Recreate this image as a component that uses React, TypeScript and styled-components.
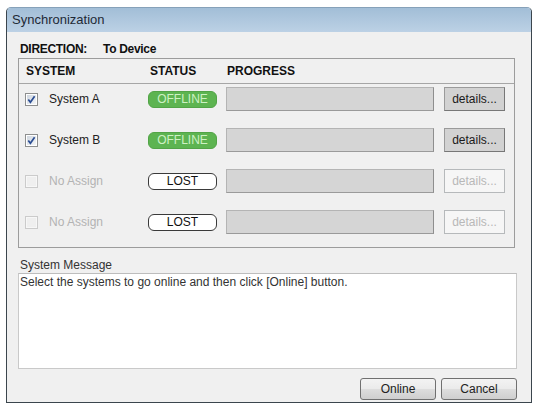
import * as React from 'react';
import styled, { createGlobalStyle } from 'styled-components';

const GlobalStyle = createGlobalStyle`
  html, body {
    margin: 0;
    padding: 0;
    background: #ffffff;
  }
  body {
    font-family: "Liberation Sans", Arial, sans-serif;
    font-size: 12px;
    color: #222;
  }
`;

const Window = styled.div`
  margin: 7px 0 0 6px;
  width: 526px;
  box-sizing: border-box;
  border: 1px solid #3b454d;
  border-top-color: #86a1b9;
  border-radius: 5px 5px 0 0;
  background: #f0f0f0;
  box-shadow: 0 1px 0 #4f8ea3;
  overflow: hidden;
  display: flex;
  flex-direction: column;
`;

const TitleBar = styled.div`
  height: 24px;
  line-height: 24px;
  padding-left: 5px;
  font-size: 13px;
  color: #1e2a36;
  background: linear-gradient(#a2bed7, #bcd1e5);
`;

const Content = styled.div`
  display: flex;
  flex-direction: column;
  padding: 10px 14px 2px 11px;
`;

const DirectionLine = styled.div`
  display: flex;
  height: 14px;
  line-height: 14px;
  padding-left: 2px;
  font-weight: bold;
  letter-spacing: -0.3px;
  color: #111;
`;

const DirectionLabel = styled.span`
  width: 83px;
`;

const Table = styled.div`
  margin: 2px 2px 0 0;
  border: 1px solid #9c9c9c;
  display: flex;
  flex-direction: column;
`;

const Grid = styled.div`
  display: grid;
  grid-template-columns: 123px 78px 218px 61px;
  align-items: center;
`;

const HeaderRow = styled(Grid)`
  height: 24px;
  padding-left: 7px;
  border-bottom: 1px solid #a6a6a6;
  font-weight: bold;
  color: #111;
`;

const HeaderCell = styled.span<{ $shift?: number }>`
  padding-left: ${(p) => p.$shift ?? 0}px;
`;

const Body = styled.div`
  display: flex;
  flex-direction: column;
  gap: 17px;
  padding: 3px 0 13px 6px;
`;

const Row = styled(Grid)`
  height: 24px;
`;

const SystemCell = styled.div`
  display: flex;
  align-items: center;
  gap: 11px;
`;

const SystemName = styled.span<{ $disabled?: boolean }>`
  color: ${(p) => (p.$disabled ? '#b3b3b3' : '#222')};
`;

const Badge = styled.div<{ $online: boolean }>`
  box-sizing: border-box;
  width: 69px;
  height: 17px;
  border-radius: 6px;
  display: flex;
  align-items: center;
  justify-content: center;
  font-size: 12px;
  ${(p) =>
    p.$online
      ? `background: #5db451; border: 1px solid #52a447; color: #cdf1c4;`
      : `background: #ffffff; border: 1px solid #3a3a3a; color: #111;`}
`;

const Progress = styled.div`
  box-sizing: border-box;
  width: 208px;
  height: 24px;
  background: #d5d5d5;
  border: 1px solid #b4b4b4;
  border-right-color: #8e8e8e;
  border-bottom-color: #9a9a9a;
`;

const DetailsButton = styled.button<{ $disabled?: boolean }>`
  box-sizing: border-box;
  width: 61px;
  height: 24px;
  padding: 0;
  font-family: "Liberation Sans", Arial, sans-serif;
  font-size: 12px;
  ${(p) =>
    p.$disabled
      ? `background: #f6f6f6; border: 1px solid #b6b9bb; color: #b8b8b8;`
      : `background: #d2d2d2; border: 1px solid #777; border-top-color: #9a9a9a; border-left-color: #9a9a9a; color: #1a1a1a;`}
`;

const MessageLabel = styled.div`
  margin-top: 10px;
  height: 14px;
  line-height: 14px;
  padding-left: 2px;
  color: #333;
`;

const MessageBox = styled.div`
  margin-top: 1px;
  box-sizing: border-box;
  height: 96px;
  background: #ffffff;
  border: 1px solid #c9c9c9;
  border-top-color: #bdbdbd;
  padding: 1px 1px;
  line-height: 14px;
  color: #333;
`;

const ButtonBar = styled.div`
  margin-top: 9px;
  display: flex;
  justify-content: flex-end;
  gap: 5px;
`;

const DialogButton = styled.button`
  box-sizing: border-box;
  width: 76px;
  height: 22px;
  padding: 0;
  border: 1px solid #707070;
  border-radius: 3px;
  background: linear-gradient(#f3f3f3 0%, #ebebeb 48%, #dddddd 52%, #cfcfcf 100%);
  font-family: "Liberation Sans", Arial, sans-serif;
  font-size: 12px;
  color: #222;
`;

const CheckBox = ({ checked, disabled }: { checked: boolean; disabled?: boolean }) => (
  <svg width="13" height="13" viewBox="0 0 13 13">
    <defs>
      <linearGradient id="cbFill" x1="0" y1="0" x2="1" y2="1">
        <stop offset="0" stopColor="#cfd6df" />
        <stop offset="1" stopColor="#f4f6f8" />
      </linearGradient>
    </defs>
    <rect x="0.5" y="0.5" width="12" height="12" fill={disabled ? '#f7f7f7' : '#ffffff'} stroke={disabled ? '#cbcbcb' : '#8e8f8f'} />
    <rect x="2" y="2" width="9" height="9" fill={disabled ? '#efefef' : 'url(#cbFill)'} />
    {checked && (
      <path d="M3.3 6.4 L5.4 9.2 L9.6 3.2" fill="none" stroke="#2b4d93" strokeWidth="1.7" />
    )}
  </svg>
);

type SystemRow = { name: string; assigned: boolean };

const systems: SystemRow[] = [
  { name: 'System A', assigned: true },
  { name: 'System B', assigned: true },
  { name: 'No Assign', assigned: false },
  { name: 'No Assign', assigned: false },
];

export default function App() {
  return (
    <>
      <GlobalStyle />
      <Window>
        <TitleBar>Synchronization</TitleBar>
        <Content>
          <DirectionLine>
            <DirectionLabel>DIRECTION:</DirectionLabel>
            <span>To Device</span>
          </DirectionLine>
          <Table>
            <HeaderRow>
              <HeaderCell>SYSTEM</HeaderCell>
              <HeaderCell $shift={1}>STATUS</HeaderCell>
              <HeaderCell $shift={-1}>PROGRESS</HeaderCell>
              <span />
            </HeaderRow>
            <Body>
              {systems.map((s, i) => (
                <Row key={i}>
                  <SystemCell>
                    <CheckBox checked={s.assigned} disabled={!s.assigned} />
                    <SystemName $disabled={!s.assigned}>{s.name}</SystemName>
                  </SystemCell>
                  <Badge $online={s.assigned}>{s.assigned ? 'OFFLINE' : 'LOST'}</Badge>
                  <Progress />
                  <DetailsButton $disabled={!s.assigned}>details...</DetailsButton>
                </Row>
              ))}
            </Body>
          </Table>
          <MessageLabel>System Message</MessageLabel>
          <MessageBox>Select the systems to go online and then click [Online] button.</MessageBox>
          <ButtonBar>
            <DialogButton>Online</DialogButton>
            <DialogButton>Cancel</DialogButton>
          </ButtonBar>
        </Content>
      </Window>
    </>
  );
}
